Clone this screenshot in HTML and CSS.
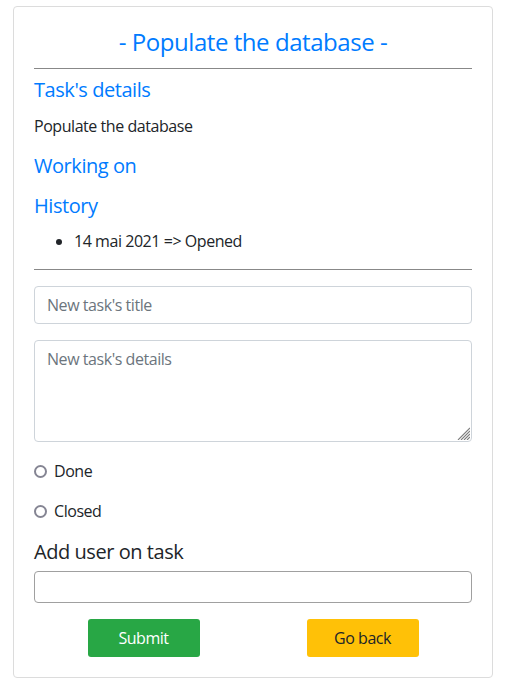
FILE: index.html
```html
<!DOCTYPE html>
<html lang="en">
<head>
<meta charset="utf-8">
<title>Populate the database</title>
<link rel="stylesheet" href="styles.css">
</head>
<body>
<div class="card">
  <h4 class="title">- Populate the database -</h4>
  <hr class="rule rule-top">
  <h5 class="section first">Task's details</h5>
  <p class="details">Populate the database</p>
  <h5 class="section">Working on</h5>
  <h5 class="section">History</h5>
  <ul class="history">
    <li>14 mai 2021 =&gt; Opened</li>
  </ul>
  <hr class="rule rule-bottom">
  <form class="form">
    <input class="control" type="text" placeholder="New task's title">
    <div class="area-wrap">
      <textarea class="control area" placeholder="New task's details"></textarea>
      <svg class="grip" width="13" height="13" viewBox="0 0 13 13" aria-hidden="true">
        <path d="M1 13 L13 1 M4 13 L13 4 M7 13 L13 7 M10 13 L13 10" stroke="#7d7d7d" stroke-width="1.1" fill="none"/>
      </svg>
    </div>
    <label class="radio"><input type="radio" name="state"><span>Done</span></label>
    <label class="radio"><input type="radio" name="state"><span>Closed</span></label>
    <label class="user-label">Add user on task</label>
    <input class="user-input" type="text">
    <div class="actions">
      <div class="cell"><button type="button" class="btn btn-green">Submit</button></div>
      <div class="cell"><button type="button" class="btn btn-yellow">Go back</button></div>
    </div>
  </form>
</div>
</body>
</html>
```
FILE: styles.css
```css
* { box-sizing: border-box; }
html, body { margin: 0; padding: 0; background: #fff; }
body {
  font-family: "Segoe UI", "Open Sans", "Noto Sans", sans-serif;
  font-size: 16px;
  line-height: 24px;
  letter-spacing: -0.028em;
  color: #212529;
}
.card {
  width: 480px;
  margin: 6px 0 0 13px;
  padding: 20px;
  border: 1px solid #dcdcdc;
  border-radius: 4px;
}
.title {
  margin: 0;
  font-size: 24px;
  line-height: 29px;
  font-weight: 400;
  color: #007bff;
  text-align: center;
}
.rule {
  border: 0;
  border-top: 1px solid #888;
  margin: 0;
  height: 0;
}
.rule-top { margin-top: 12px; }
.section {
  margin: 16px 0 0;
  font-size: 20px;
  line-height: 24px;
  font-weight: 400;
  color: #007bff;
}
.section.first { margin-top: 9px; }
.details { margin: 12px 0 0; }
.history { margin: 11px 0 0; padding-left: 40px; }
.rule-bottom { margin-top: 16px; }
.form { display: flex; flex-direction: column; margin-top: 16px; }
.control {
  font: inherit;
  letter-spacing: inherit;
  width: 100%;
  height: 38px;
  padding: 6px 12px;
  border: 1px solid #ced4da;
  border-radius: 4px;
  color: #495057;
}
.control::placeholder { color: #6c757d; }
.area-wrap { position: relative; margin-top: 16px; height: 102px; }
.area { display: block; height: 102px; resize: none; }
.grip { position: absolute; right: 2px; bottom: 2px; }
.radio { display: flex; align-items: center; gap: 7px; margin-top: 16px; }
.area-wrap + .radio { margin-top: 17px; }
.radio input {
  appearance: none;
  -webkit-appearance: none;
  width: 13px;
  height: 13px;
  margin: 0;
  border: 2px solid #858593;
  border-radius: 50%;
}
.user-label { margin-top: 17px; font-size: 20px; line-height: 24px; }
.user-input {
  font: inherit;
  margin-top: 7px;
  height: 32px;
  border: 1px solid #a0a0a0;
  border-radius: 4px;
  padding: 2px 8px;
}
.actions { display: flex; margin-top: 16px; }
.cell { flex: 1; display: flex; justify-content: center; }
.btn {
  font: inherit;
  letter-spacing: inherit;
  width: 112px;
  height: 38px;
  border: 0;
  border-radius: 3px;
}
.btn-green { background: #28a745; color: #fff; }
.btn-yellow { background: #ffc107; color: #212529; }
```
